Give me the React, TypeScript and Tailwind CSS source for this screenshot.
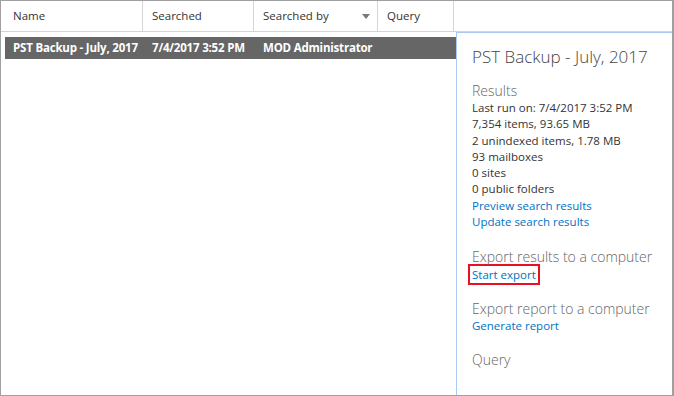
const font = { fontFamily: '"Open Sans", "Noto Sans", sans-serif' };

const columns = [
  { label: "Name", width: "w-[142px]" },
  { label: "Searched", width: "w-[111px]" },
  { label: "Searched by", width: "w-[124px]", sort: true },
  { label: "Query", width: "w-[76px]" },
];

function SectionTitle({ children }: { children: React.ReactNode }) {
  return <div className="text-[14px] leading-[18px] font-light text-[#666]">{children}</div>;
}

function Link({ children }: { children: React.ReactNode }) {
  return <a className="text-[#0072c6] cursor-pointer">{children}</a>;
}

export default function App() {
  return (
    <div
      className="w-[674px] h-[396px] bg-white border border-r-2 border-[#a0a0a0] flex flex-col overflow-hidden"
      style={font}
    >
      {/* column header */}
      <div className="flex h-[31px] shrink-0 border-b border-[#d4d4d4] text-[11.5px] text-[#333]">
        {columns.map((c) => (
          <div
            key={c.label}
            className={`${c.width} flex items-center justify-between pl-[9px] first:pl-[12px] pr-[6px] border-r border-[#d4d4d4]`}
          >
            <span>{c.label}</span>
            {c.sort && (
              <svg width="8" height="5" viewBox="0 0 8 5" className="mr-[1px]">
                <path d="M0 0h8L4 5z" fill="#7a7a7a" />
              </svg>
            )}
          </div>
        ))}
      </div>

      <div className="flex flex-1 min-h-0">
        {/* results list */}
        <div className="flex-1 pt-[5px] pl-[4px]">
          <div className="flex h-[22px] items-center bg-[#666] text-white font-bold text-[11.5px] tracking-[-0.2px]">
            <span className="w-[147px] pl-[8px]">PST Backup - July, 2017</span>
            <span className="w-[111px]">7/4/2017 3:52 PM</span>
            <span>MOD Administrator</span>
          </div>
        </div>

        {/* details panel */}
        <div className="w-[216px] shrink-0 border-l border-t border-[#a9c9f3] pl-[15px] pt-[12px] text-[11.5px] leading-[16.3px] text-[#333]">
          <div className="text-[17px] leading-[24px] font-light text-[#444] mb-[13px]">PST Backup - July, 2017</div>

          <SectionTitle>Results</SectionTitle>
          <div>Last run on: 7/4/2017 3:52 PM</div>
          <div>7,354 items, 93.65 MB</div>
          <div>2 unindexed items, 1.78 MB</div>
          <div>93 mailboxes</div>
          <div>0 sites</div>
          <div>0 public folders</div>
          <div><Link>Preview search results</Link></div>
          <div><Link>Update search results</Link></div>

          <div className="mt-[18px]">
            <SectionTitle>Export results to a computer</SectionTitle>
            <div className="-ml-[4px] -mt-[2px] w-fit border-2 border-[#e81123] px-[2px] leading-[17px]">
              <Link>Start export</Link>
            </div>
          </div>

          <div className="mt-[15px]">
            <SectionTitle>Export report to a computer</SectionTitle>
            <div><Link>Generate report</Link></div>
          </div>

          <div className="mt-[16px]">
            <SectionTitle>Query</SectionTitle>
          </div>
        </div>
      </div>
    </div>
  );
}
